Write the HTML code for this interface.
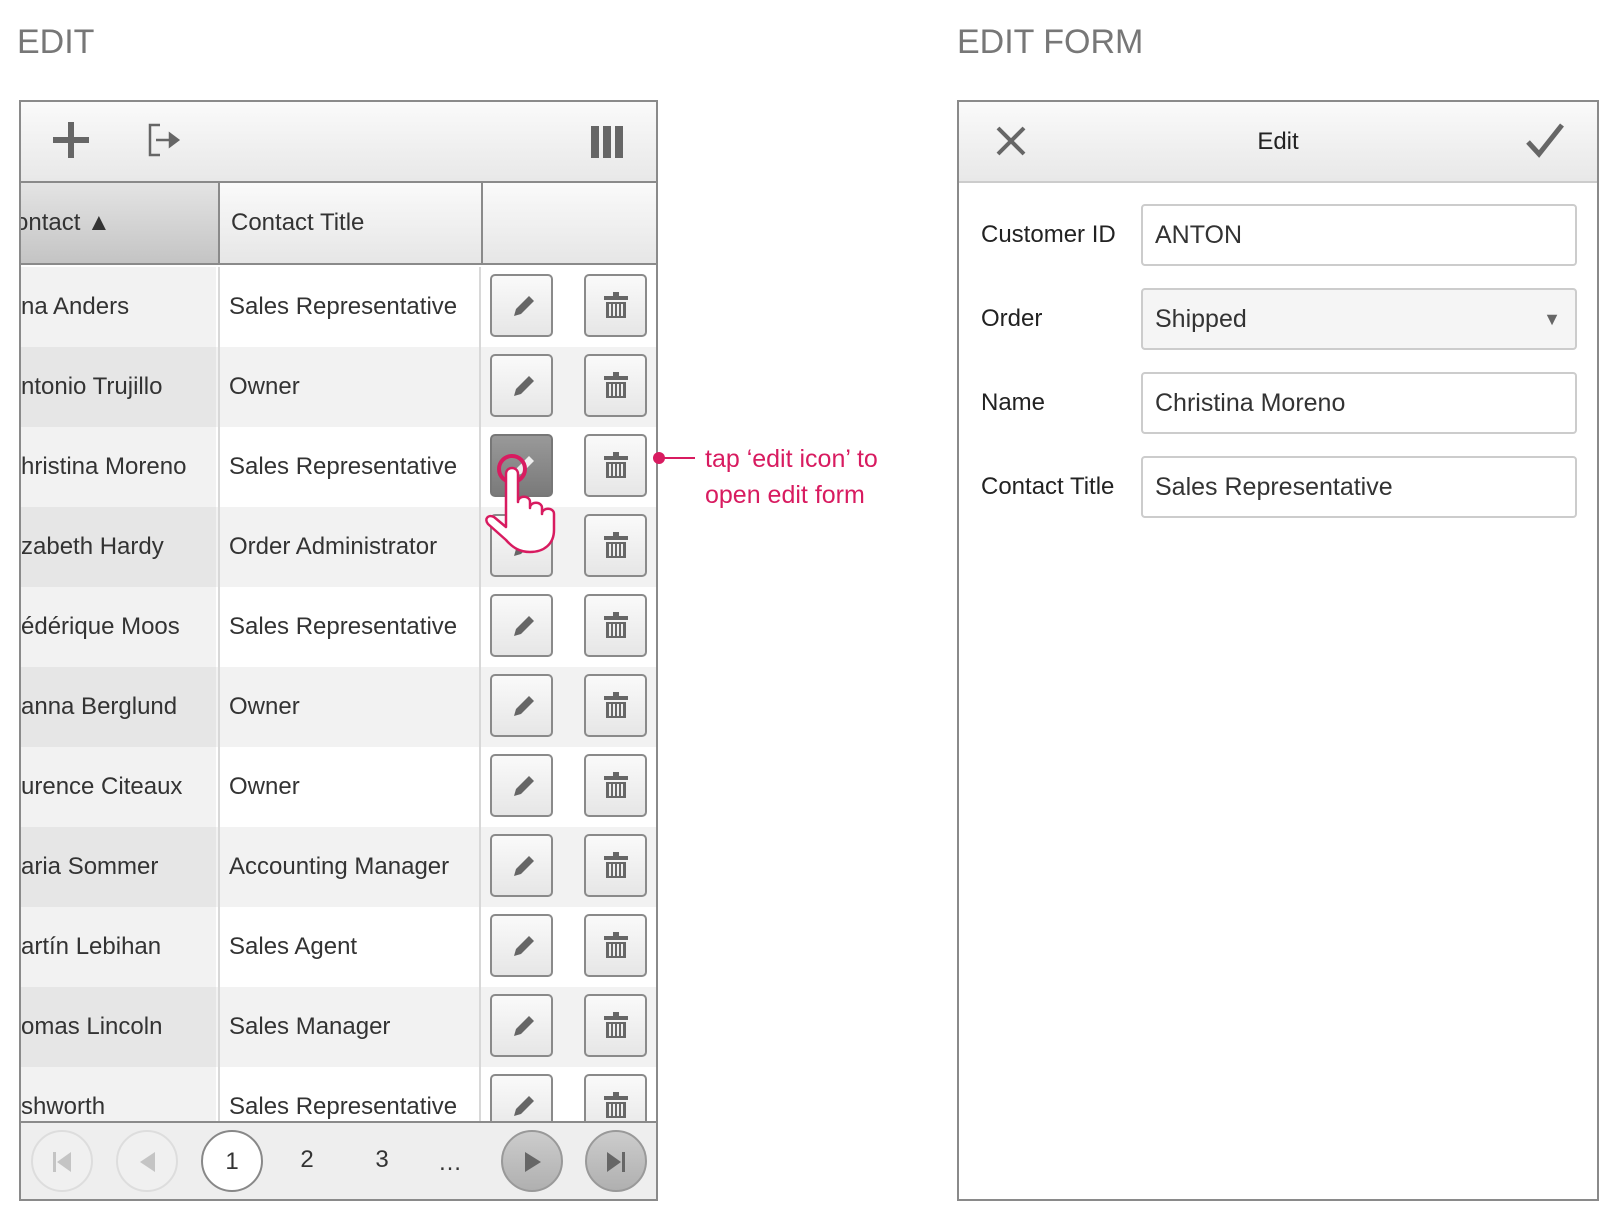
<!DOCTYPE html>
<html><head><meta charset="utf-8"><style>
*{box-sizing:border-box;margin:0;padding:0}
body{width:1623px;height:1227px;background:#fff;font-family:"Liberation Sans",sans-serif;position:relative;overflow:hidden;color:#333}
.a{position:absolute}
.title{font-size:34px;color:#777;top:23px}
.grid{left:19px;top:100px;width:639px;height:1101px;border:2px solid #8a8a8a;overflow:hidden;background:#fff}
.tb{left:0;top:0;width:640px;height:81px;background:linear-gradient(#fafafa,#e8e8e8);border-bottom:2px solid #8a8a8a}
.hd{top:81px;height:82px;border-bottom:2px solid #8a8a8a;font-size:24px;line-height:80px}
.row{left:0;width:640px;height:80px;font-size:24px;line-height:80px}
.c1{position:absolute;left:0;width:195px;height:100%;white-space:nowrap;overflow:hidden}
.c2{position:absolute;left:197px;width:263px;height:100%;padding-left:9px;white-space:nowrap;border-left:2px solid #d8d8d8;border-right:2px solid #d8d8d8}
.w .c1{background:#f2f2f2}.w{background:#fff}
.g .c1{background:#e6e6e6}.g{background:#f2f2f2}
.btn{position:absolute;top:7px;width:63px;height:63px;border:2px solid #8a8a8a;border-radius:5px;background:linear-gradient(#fafafa,#e6e6e6)}
.b1{left:469px}.b2{left:563px}
.btn svg{position:absolute;left:14px;top:14px}
.pg{left:0;top:1019px;width:640px;height:80px;background:#eee;border-top:2px solid #8a8a8a}
.circ{position:absolute;top:7px;width:62px;height:62px;border-radius:50%;text-align:center;line-height:60px;font-size:24px}
.form{left:957px;top:100px;width:642px;height:1101px;border:2px solid #8a8a8a}
.fh{left:0;top:0;width:638px;height:81px;background:linear-gradient(#fafafa,#e8e8e8);border-bottom:2px solid #ccc}
.lbl{left:22px;font-size:24px;color:#222}
.inp{left:182px;width:436px;height:62px;border:2px solid #ccc;border-radius:4px;font-size:25px;line-height:58px;padding-left:12px;color:#333;background:#fff}
.pink{color:#d81b60}
</style></head><body>
<div class="a title" style="left:17px">EDIT</div>
<div class="a title" style="left:957px">EDIT FORM</div>

<div class="a grid">
 <div class="a tb">
  <svg class="a" style="left:30px;top:18px" width="40" height="40"><rect x="17" y="2" width="6" height="36" fill="#666"/><rect x="2" y="17" width="36" height="6" fill="#666"/></svg>
  <svg class="a" style="left:125px;top:20px" width="40" height="36" fill="none" stroke="#666" stroke-width="2.5"><path d="M14 3H4v30h10M10 18h16"/><path d="M24 12l8 6-8 6z" fill="#666"/></svg>
  <svg class="a" style="left:570px;top:24px" width="32" height="32"><rect x="0" y="0" width="8" height="32" fill="#666"/><rect x="12" y="0" width="8" height="32" fill="#666"/><rect x="24" y="0" width="8" height="32" fill="#666"/></svg>
 </div>
 <div class="a hd" style="left:0;width:197px;background:linear-gradient(#e4e4e4,#c4c4c4)"><span style="margin-left:-6px">ontact ▲</span></div>
 <div class="a hd" style="left:197px;width:263px;background:linear-gradient(#fafafa,#e6e6e6);border-left:2px solid #8a8a8a;padding-left:11px">Contact Title</div>
 <div class="a hd" style="left:460px;width:180px;background:linear-gradient(#fafafa,#e6e6e6);border-left:2px solid #8a8a8a"></div>

 <div class="a row w" style="top:165px"><div class="c1">na Anders</div><div class="c2">Sales Representative</div><div class="btn b1"><svg width="32" height="32"><path d="M8 26l2-7 13-13 5 5-13 13z" fill="#666"/></svg></div><div class="btn b2"><svg width="32" height="32" fill="#666"><rect x="13" y="2" width="6" height="4"/><rect x="4" y="6" width="24" height="4"/><path d="M6 12h20v16H6z M9 14v12h2V14z M13 14v12h2V14z M17 14v12h2V14z M21 14v12h2V14z" fill-rule="evenodd"/></svg></div></div>
 <div class="a row g" style="top:245px"><div class="c1">ntonio Trujillo</div><div class="c2">Owner</div><div class="btn b1"><svg width="32" height="32"><path d="M8 26l2-7 13-13 5 5-13 13z" fill="#666"/></svg></div><div class="btn b2"><svg width="32" height="32" fill="#666"><rect x="13" y="2" width="6" height="4"/><rect x="4" y="6" width="24" height="4"/><path d="M6 12h20v16H6z M9 14v12h2V14z M13 14v12h2V14z M17 14v12h2V14z M21 14v12h2V14z" fill-rule="evenodd"/></svg></div></div>
 <div class="a row w" style="top:325px"><div class="c1">hristina Moreno</div><div class="c2">Sales Representative</div><div class="btn b1" style="background:linear-gradient(#999,#7a7a7a);border-color:#777"><svg width="32" height="32"><path d="M8 26l2-7 13-13 5 5-13 13z" fill="#eee"/></svg></div><div class="btn b2"><svg width="32" height="32" fill="#666"><rect x="13" y="2" width="6" height="4"/><rect x="4" y="6" width="24" height="4"/><path d="M6 12h20v16H6z M9 14v12h2V14z M13 14v12h2V14z M17 14v12h2V14z M21 14v12h2V14z" fill-rule="evenodd"/></svg></div></div>
 <div class="a row g" style="top:405px"><div class="c1">zabeth Hardy</div><div class="c2">Order Administrator</div><div class="btn b1"><svg width="32" height="32"><path d="M8 26l2-7 13-13 5 5-13 13z" fill="#666"/></svg></div><div class="btn b2"><svg width="32" height="32" fill="#666"><rect x="13" y="2" width="6" height="4"/><rect x="4" y="6" width="24" height="4"/><path d="M6 12h20v16H6z M9 14v12h2V14z M13 14v12h2V14z M17 14v12h2V14z M21 14v12h2V14z" fill-rule="evenodd"/></svg></div></div>
 <div class="a row w" style="top:485px"><div class="c1">édérique Moos</div><div class="c2">Sales Representative</div><div class="btn b1"><svg width="32" height="32"><path d="M8 26l2-7 13-13 5 5-13 13z" fill="#666"/></svg></div><div class="btn b2"><svg width="32" height="32" fill="#666"><rect x="13" y="2" width="6" height="4"/><rect x="4" y="6" width="24" height="4"/><path d="M6 12h20v16H6z M9 14v12h2V14z M13 14v12h2V14z M17 14v12h2V14z M21 14v12h2V14z" fill-rule="evenodd"/></svg></div></div>
 <div class="a row g" style="top:565px"><div class="c1">anna Berglund</div><div class="c2">Owner</div><div class="btn b1"><svg width="32" height="32"><path d="M8 26l2-7 13-13 5 5-13 13z" fill="#666"/></svg></div><div class="btn b2"><svg width="32" height="32" fill="#666"><rect x="13" y="2" width="6" height="4"/><rect x="4" y="6" width="24" height="4"/><path d="M6 12h20v16H6z M9 14v12h2V14z M13 14v12h2V14z M17 14v12h2V14z M21 14v12h2V14z" fill-rule="evenodd"/></svg></div></div>
 <div class="a row w" style="top:645px"><div class="c1">urence Citeaux</div><div class="c2">Owner</div><div class="btn b1"><svg width="32" height="32"><path d="M8 26l2-7 13-13 5 5-13 13z" fill="#666"/></svg></div><div class="btn b2"><svg width="32" height="32" fill="#666"><rect x="13" y="2" width="6" height="4"/><rect x="4" y="6" width="24" height="4"/><path d="M6 12h20v16H6z M9 14v12h2V14z M13 14v12h2V14z M17 14v12h2V14z M21 14v12h2V14z" fill-rule="evenodd"/></svg></div></div>
 <div class="a row g" style="top:725px"><div class="c1">aria Sommer</div><div class="c2">Accounting Manager</div><div class="btn b1"><svg width="32" height="32"><path d="M8 26l2-7 13-13 5 5-13 13z" fill="#666"/></svg></div><div class="btn b2"><svg width="32" height="32" fill="#666"><rect x="13" y="2" width="6" height="4"/><rect x="4" y="6" width="24" height="4"/><path d="M6 12h20v16H6z M9 14v12h2V14z M13 14v12h2V14z M17 14v12h2V14z M21 14v12h2V14z" fill-rule="evenodd"/></svg></div></div>
 <div class="a row w" style="top:805px"><div class="c1">artín Lebihan</div><div class="c2">Sales Agent</div><div class="btn b1"><svg width="32" height="32"><path d="M8 26l2-7 13-13 5 5-13 13z" fill="#666"/></svg></div><div class="btn b2"><svg width="32" height="32" fill="#666"><rect x="13" y="2" width="6" height="4"/><rect x="4" y="6" width="24" height="4"/><path d="M6 12h20v16H6z M9 14v12h2V14z M13 14v12h2V14z M17 14v12h2V14z M21 14v12h2V14z" fill-rule="evenodd"/></svg></div></div>
 <div class="a row g" style="top:885px"><div class="c1">omas Lincoln</div><div class="c2">Sales Manager</div><div class="btn b1"><svg width="32" height="32"><path d="M8 26l2-7 13-13 5 5-13 13z" fill="#666"/></svg></div><div class="btn b2"><svg width="32" height="32" fill="#666"><rect x="13" y="2" width="6" height="4"/><rect x="4" y="6" width="24" height="4"/><path d="M6 12h20v16H6z M9 14v12h2V14z M13 14v12h2V14z M17 14v12h2V14z M21 14v12h2V14z" fill-rule="evenodd"/></svg></div></div>
 <div class="a row w" style="top:965px"><div class="c1">shworth</div><div class="c2">Sales Representative</div><div class="btn b1"><svg width="32" height="32"><path d="M8 26l2-7 13-13 5 5-13 13z" fill="#666"/></svg></div><div class="btn b2"><svg width="32" height="32" fill="#666"><rect x="13" y="2" width="6" height="4"/><rect x="4" y="6" width="24" height="4"/><path d="M6 12h20v16H6z M9 14v12h2V14z M13 14v12h2V14z M17 14v12h2V14z M21 14v12h2V14z" fill-rule="evenodd"/></svg></div></div>

 <div class="a pg">
  <div class="circ" style="left:10px;border:2px solid #ddd;background:#f0f0f0"><svg width="24" height="24" style="margin-top:18px"><rect x="3" y="2" width="3" height="20" fill="#c4c4c4"/><path d="M21 2v20L7 12z" fill="#c4c4c4"/></svg></div>
  <div class="circ" style="left:95px;border:2px solid #ddd;background:#f0f0f0"><svg width="24" height="24" style="margin-top:18px"><path d="M20 2v20L5 12z" fill="#c4c4c4"/></svg></div>
  <div class="circ" style="left:180px;border:2px solid #888;background:#fff">1</div>
  <div class="circ" style="left:255px">2</div>
  <div class="circ" style="left:330px">3</div>
  <div class="circ" style="left:398px;line-height:66px">…</div>
  <div class="circ" style="left:480px;border:2px solid #999;background:linear-gradient(#ccc,#b0b0b0)"><svg width="24" height="24" style="margin-top:18px"><path d="M5 2v20l16-10z" fill="#666"/></svg></div>
  <div class="circ" style="left:564px;border:2px solid #999;background:linear-gradient(#ccc,#b0b0b0)"><svg width="24" height="24" style="margin-top:18px"><path d="M3 2v20l14-10z" fill="#666"/><rect x="18" y="2" width="3" height="20" fill="#666"/></svg></div>
 </div>
</div>

<svg class="a" style="left:480px;top:452px" width="100" height="110" viewBox="0 0 100 110">
 <circle cx="32" cy="17" r="13" fill="none" stroke="#d81b60" stroke-width="4"/>
 <path d="M26 75V22c0-8 12-8 12 0v28c0-7 12-7 12 0v6c0-7 12-7 12 0v6c0-7 12-7 12 0v16c0 14-10 22-24 22-10 0-17-4-24-12L8 72c-4-5 0-10 6-7z" fill="#fff" stroke="#d81b60" stroke-width="2.5" stroke-linejoin="round"/>
</svg>

<svg class="a" style="left:652px;top:450px" width="50" height="16"><circle cx="7" cy="8" r="6" fill="#d81b60"/><rect x="7" y="7" width="36" height="2" fill="#d81b60"/></svg>
<div class="a pink" style="left:705px;top:441px;font-size:25px;line-height:36px">tap ‘edit icon’ to<br>open edit form</div>

<div class="a form">
 <div class="a fh">
  <svg class="a" style="left:36px;top:23px" width="32" height="32" stroke="#666" stroke-width="4"><path d="M3 3l26 26M29 3L3 29"/></svg>
  <div class="a" style="left:0;width:638px;top:26px;text-align:center;font-size:24px;color:#222">Edit</div>
  <svg class="a" style="left:566px;top:20px" width="40" height="36" fill="none" stroke="#666" stroke-width="5"><path d="M3 20l11 12L37 3"/></svg>
 </div>
 <div class="a lbl" style="top:119px">Customer ID</div>
 <div class="a inp" style="top:102px">ANTON</div>
 <div class="a lbl" style="top:203px">Order</div>
 <div class="a inp" style="top:186px;background:#f5f5f5">Shipped<span style="position:absolute;right:14px;top:0;font-size:18px;color:#666">▼</span></div>
 <div class="a lbl" style="top:287px">Name</div>
 <div class="a inp" style="top:270px">Christina Moreno</div>
 <div class="a lbl" style="top:371px">Contact Title</div>
 <div class="a inp" style="top:354px">Sales Representative</div>
</div>
</body></html>
